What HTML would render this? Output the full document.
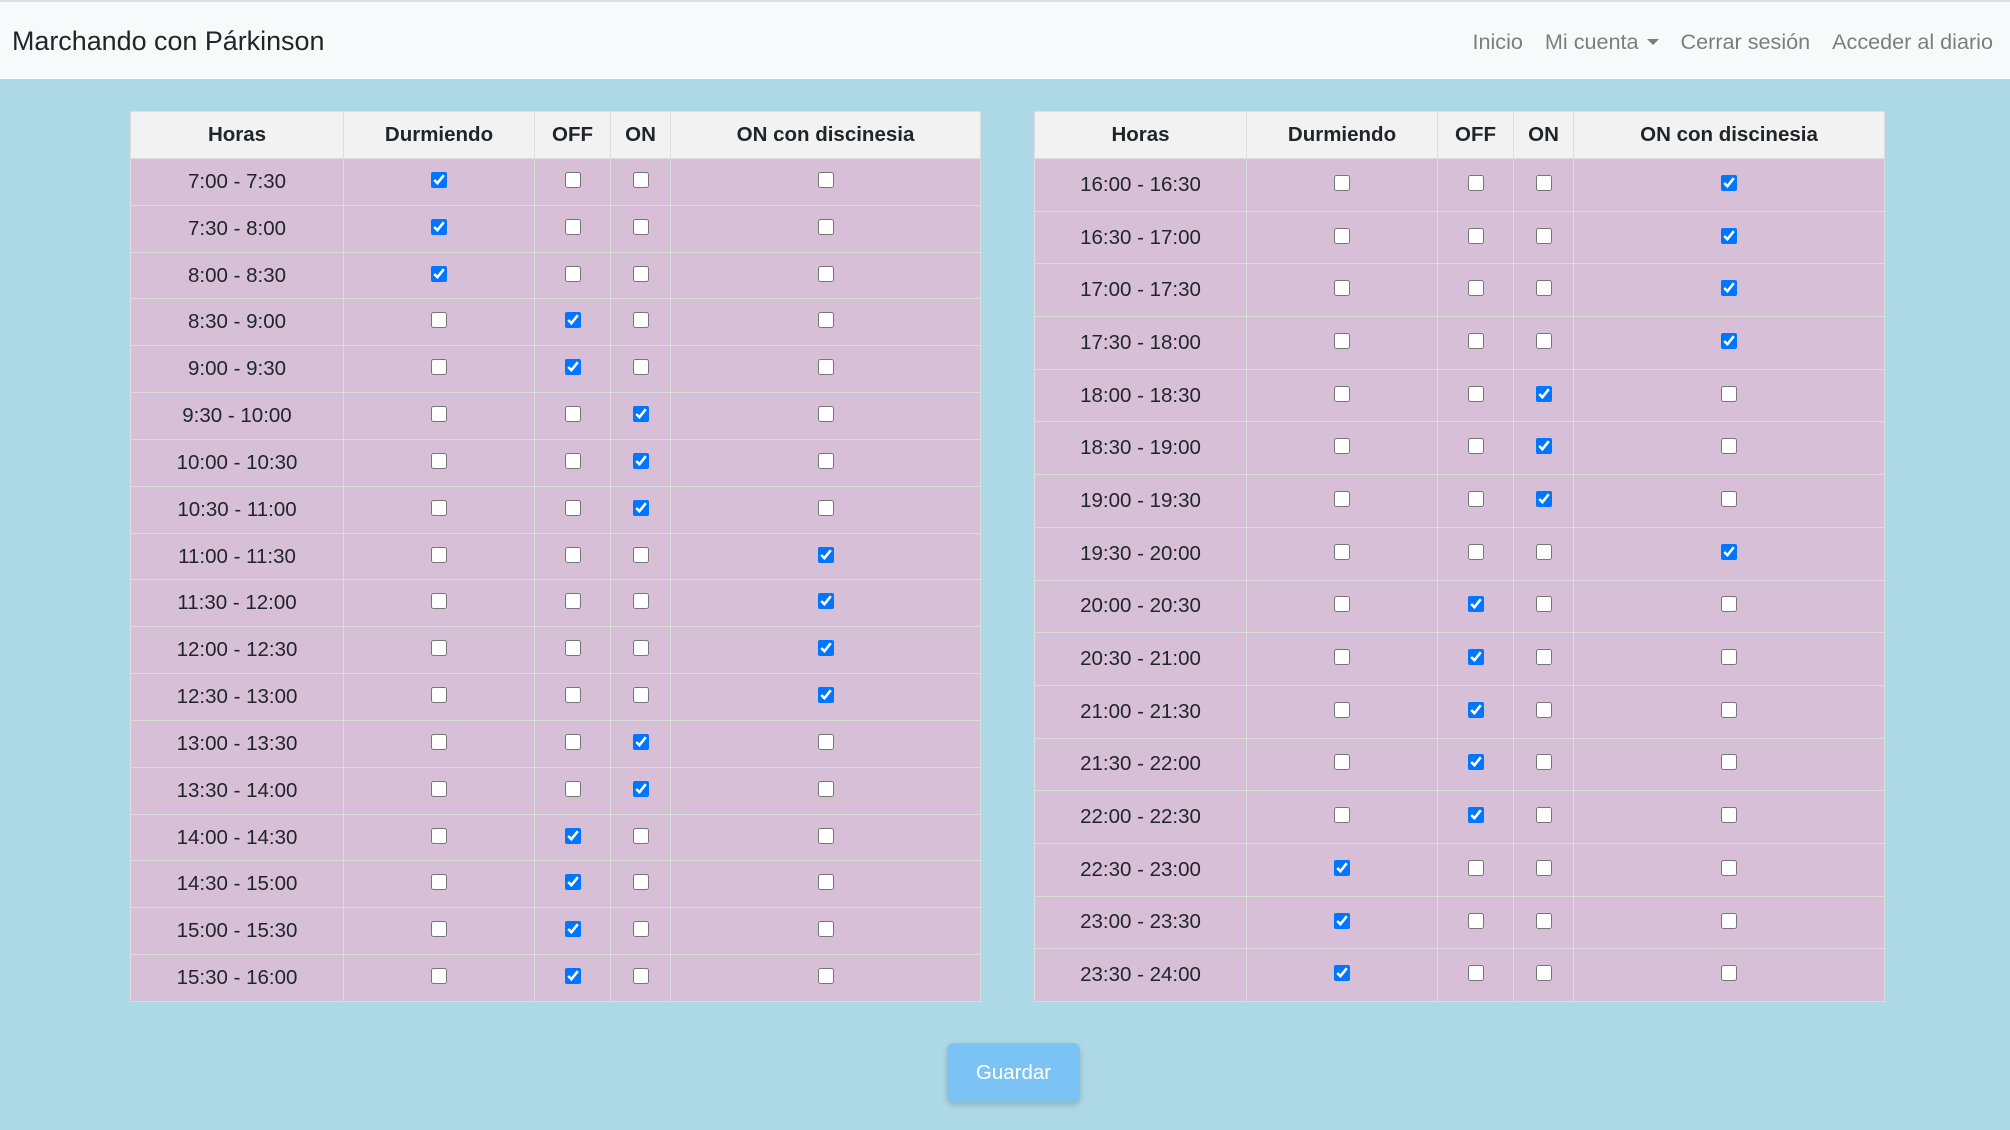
<!DOCTYPE html>
<html><head><meta charset="utf-8"><style>
*{box-sizing:border-box}
body{margin:0;width:2010px;height:1130px;background:#add8e6;font-family:"Liberation Sans",Arial,sans-serif;color:#212529;position:relative;overflow:hidden}
.nav{position:absolute;left:0;top:0;width:2010px;height:79px;background:#f8f9fa;border-top:2px solid #dfdfdf}
.brand{position:absolute;left:12px;top:24px;font-size:26.9px;color:#212529}
.links{position:absolute;right:17px;top:27px;font-size:21.6px;color:rgba(0,0,0,.5)}
.links span{margin-left:22px}
.caret{display:inline-block;width:0;height:0;border-left:6px solid transparent;border-right:6px solid transparent;border-top:6px solid rgba(0,0,0,.5);vertical-align:4px;margin-left:8px}
table{position:absolute;top:111px;border-collapse:collapse;table-layout:fixed;font-size:20.5px}
td,th{border:1px solid #ddd;text-align:center;padding:0;vertical-align:middle}
th{background:#f2f2f2;height:47px;font-weight:bold}
td{background:#d8bfd8}
#l{left:130px;width:850px}
#r{left:1034px;width:850px}
#l td{height:46.83px}
#r td{height:52.7px}
input{width:16px;height:16px;margin:-5px 0 0 0;accent-color:#0075ff;vertical-align:middle}
.btn{position:absolute;left:947px;top:1043px;width:133px;height:59px;background:#7bc3f5;border-radius:7px;color:#fff;font-size:20.5px;text-align:center;line-height:59px;box-shadow:0 3px 6px rgba(0,0,0,.18)}
</style></head><body>
<div class="nav"><div class="brand">Marchando con Párkinson</div>
<div class="links"><span>Inicio</span><span>Mi cuenta<i class="caret"></i></span><span>Cerrar sesión</span><span>Acceder al diario</span></div></div>

<table id="l"><colgroup><col style="width:213px"><col style="width:191px"><col style="width:76px"><col style="width:60px"><col style="width:310px"></colgroup>
<tr><th>Horas</th><th>Durmiendo</th><th>OFF</th><th>ON</th><th>ON con discinesia</th></tr>
<tr><td>7:00 - 7:30</td><td><input type="checkbox" checked></td><td><input type="checkbox"></td><td><input type="checkbox"></td><td><input type="checkbox"></td></tr>
<tr><td>7:30 - 8:00</td><td><input type="checkbox" checked></td><td><input type="checkbox"></td><td><input type="checkbox"></td><td><input type="checkbox"></td></tr>
<tr><td>8:00 - 8:30</td><td><input type="checkbox" checked></td><td><input type="checkbox"></td><td><input type="checkbox"></td><td><input type="checkbox"></td></tr>
<tr><td>8:30 - 9:00</td><td><input type="checkbox"></td><td><input type="checkbox" checked></td><td><input type="checkbox"></td><td><input type="checkbox"></td></tr>
<tr><td>9:00 - 9:30</td><td><input type="checkbox"></td><td><input type="checkbox" checked></td><td><input type="checkbox"></td><td><input type="checkbox"></td></tr>
<tr><td>9:30 - 10:00</td><td><input type="checkbox"></td><td><input type="checkbox"></td><td><input type="checkbox" checked></td><td><input type="checkbox"></td></tr>
<tr><td>10:00 - 10:30</td><td><input type="checkbox"></td><td><input type="checkbox"></td><td><input type="checkbox" checked></td><td><input type="checkbox"></td></tr>
<tr><td>10:30 - 11:00</td><td><input type="checkbox"></td><td><input type="checkbox"></td><td><input type="checkbox" checked></td><td><input type="checkbox"></td></tr>
<tr><td>11:00 - 11:30</td><td><input type="checkbox"></td><td><input type="checkbox"></td><td><input type="checkbox"></td><td><input type="checkbox" checked></td></tr>
<tr><td>11:30 - 12:00</td><td><input type="checkbox"></td><td><input type="checkbox"></td><td><input type="checkbox"></td><td><input type="checkbox" checked></td></tr>
<tr><td>12:00 - 12:30</td><td><input type="checkbox"></td><td><input type="checkbox"></td><td><input type="checkbox"></td><td><input type="checkbox" checked></td></tr>
<tr><td>12:30 - 13:00</td><td><input type="checkbox"></td><td><input type="checkbox"></td><td><input type="checkbox"></td><td><input type="checkbox" checked></td></tr>
<tr><td>13:00 - 13:30</td><td><input type="checkbox"></td><td><input type="checkbox"></td><td><input type="checkbox" checked></td><td><input type="checkbox"></td></tr>
<tr><td>13:30 - 14:00</td><td><input type="checkbox"></td><td><input type="checkbox"></td><td><input type="checkbox" checked></td><td><input type="checkbox"></td></tr>
<tr><td>14:00 - 14:30</td><td><input type="checkbox"></td><td><input type="checkbox" checked></td><td><input type="checkbox"></td><td><input type="checkbox"></td></tr>
<tr><td>14:30 - 15:00</td><td><input type="checkbox"></td><td><input type="checkbox" checked></td><td><input type="checkbox"></td><td><input type="checkbox"></td></tr>
<tr><td>15:00 - 15:30</td><td><input type="checkbox"></td><td><input type="checkbox" checked></td><td><input type="checkbox"></td><td><input type="checkbox"></td></tr>
<tr><td>15:30 - 16:00</td><td><input type="checkbox"></td><td><input type="checkbox" checked></td><td><input type="checkbox"></td><td><input type="checkbox"></td></tr>
</table>

<table id="r"><colgroup><col style="width:212px"><col style="width:191px"><col style="width:76px"><col style="width:60px"><col style="width:311px"></colgroup>
<tr><th>Horas</th><th>Durmiendo</th><th>OFF</th><th>ON</th><th>ON con discinesia</th></tr>
<tr><td>16:00 - 16:30</td><td><input type="checkbox"></td><td><input type="checkbox"></td><td><input type="checkbox"></td><td><input type="checkbox" checked></td></tr>
<tr><td>16:30 - 17:00</td><td><input type="checkbox"></td><td><input type="checkbox"></td><td><input type="checkbox"></td><td><input type="checkbox" checked></td></tr>
<tr><td>17:00 - 17:30</td><td><input type="checkbox"></td><td><input type="checkbox"></td><td><input type="checkbox"></td><td><input type="checkbox" checked></td></tr>
<tr><td>17:30 - 18:00</td><td><input type="checkbox"></td><td><input type="checkbox"></td><td><input type="checkbox"></td><td><input type="checkbox" checked></td></tr>
<tr><td>18:00 - 18:30</td><td><input type="checkbox"></td><td><input type="checkbox"></td><td><input type="checkbox" checked></td><td><input type="checkbox"></td></tr>
<tr><td>18:30 - 19:00</td><td><input type="checkbox"></td><td><input type="checkbox"></td><td><input type="checkbox" checked></td><td><input type="checkbox"></td></tr>
<tr><td>19:00 - 19:30</td><td><input type="checkbox"></td><td><input type="checkbox"></td><td><input type="checkbox" checked></td><td><input type="checkbox"></td></tr>
<tr><td>19:30 - 20:00</td><td><input type="checkbox"></td><td><input type="checkbox"></td><td><input type="checkbox"></td><td><input type="checkbox" checked></td></tr>
<tr><td>20:00 - 20:30</td><td><input type="checkbox"></td><td><input type="checkbox" checked></td><td><input type="checkbox"></td><td><input type="checkbox"></td></tr>
<tr><td>20:30 - 21:00</td><td><input type="checkbox"></td><td><input type="checkbox" checked></td><td><input type="checkbox"></td><td><input type="checkbox"></td></tr>
<tr><td>21:00 - 21:30</td><td><input type="checkbox"></td><td><input type="checkbox" checked></td><td><input type="checkbox"></td><td><input type="checkbox"></td></tr>
<tr><td>21:30 - 22:00</td><td><input type="checkbox"></td><td><input type="checkbox" checked></td><td><input type="checkbox"></td><td><input type="checkbox"></td></tr>
<tr><td>22:00 - 22:30</td><td><input type="checkbox"></td><td><input type="checkbox" checked></td><td><input type="checkbox"></td><td><input type="checkbox"></td></tr>
<tr><td>22:30 - 23:00</td><td><input type="checkbox" checked></td><td><input type="checkbox"></td><td><input type="checkbox"></td><td><input type="checkbox"></td></tr>
<tr><td>23:00 - 23:30</td><td><input type="checkbox" checked></td><td><input type="checkbox"></td><td><input type="checkbox"></td><td><input type="checkbox"></td></tr>
<tr><td>23:30 - 24:00</td><td><input type="checkbox" checked></td><td><input type="checkbox"></td><td><input type="checkbox"></td><td><input type="checkbox"></td></tr>
</table>

<div class="btn">Guardar</div>
</body></html>
